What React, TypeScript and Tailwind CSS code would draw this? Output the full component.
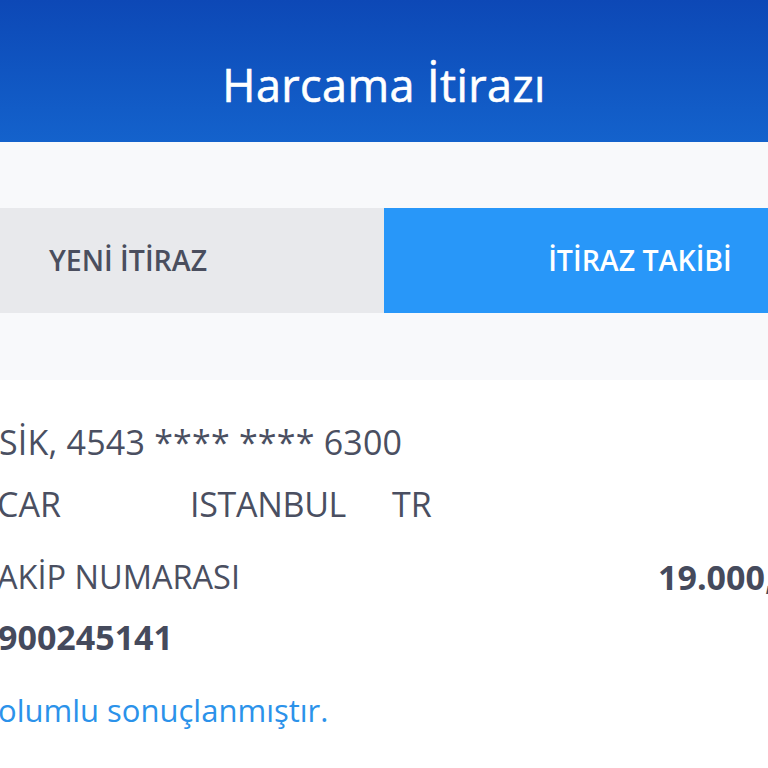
import React from "react";

export default function App() {
  return (
    <div
      className="w-[768px] h-[768px] overflow-hidden bg-white"
      style={{ fontFamily: '"Open Sans", "Noto Sans", sans-serif' }}
    >
      {/* Header */}
      <div className="h-[142px] pt-[54px] bg-gradient-to-b from-[#0d48b6] to-[#1462cc] text-center">
        <h1 className="text-[45px] leading-[61px] text-white font-medium tracking-[0.4px] whitespace-nowrap [-webkit-text-stroke:0.6px_white]">
          Harcama İtirazı
        </h1>
      </div>

      {/* Tabs area */}
      <div className="bg-[#f8f9fb] pt-[66px] pb-[67px]">
        <div className="flex w-[1024px] ml-[-128px] h-[105px]">
          <button className="w-[512px] h-full bg-[#e8e9ec] text-[#4a4e5e] text-[28.5px] font-semibold leading-[105px] text-center whitespace-nowrap">
            YENİ İTİRAZ
          </button>
          <button className="w-[512px] h-full bg-[#2897f9] text-white text-[28.5px] font-semibold leading-[105px] text-center whitespace-nowrap">
            İTİRAZ TAKİBİ
          </button>
        </div>
      </div>

      {/* Detail */}
      <div className="pt-[31px] text-[34px] text-[#4a4f61]">
        <div className="h-[62px] leading-[62px] whitespace-nowrap ml-[-1px] tracking-[0.2px]">
          SİK, 4543 **** **** 6300
        </div>
        <div className="h-[62px] leading-[62px] whitespace-nowrap flex">
          <span className="w-[190px] shrink-0 ml-[-3px]">CAR</span>
          <span className="w-[202px] shrink-0 ml-[3px] tracking-[-0.3px]">ISTANBUL</span>
          <span className="shrink-0">TR</span>
        </div>
        <div className="mt-[11px] h-[60px] leading-[62px] whitespace-nowrap flex">
          <span className="w-[661px] shrink-0 ml-[-3px] text-[32.5px]">AKİP NUMARASI</span>
          <span className="shrink-0 font-bold text-[#454a5c]">19.000,00 TL</span>
        </div>
        <div className="h-[62px] leading-[62px] whitespace-nowrap font-bold text-[#454a5c] ml-[-2px]">
          900245141
        </div>
        <div className="mt-[11px] h-[62px] leading-[62px] whitespace-nowrap text-[#2b92ea] text-[31px] ml-[-2px]">
          olumlu sonuçlanmıştır.
        </div>
      </div>
    </div>
  );
}
